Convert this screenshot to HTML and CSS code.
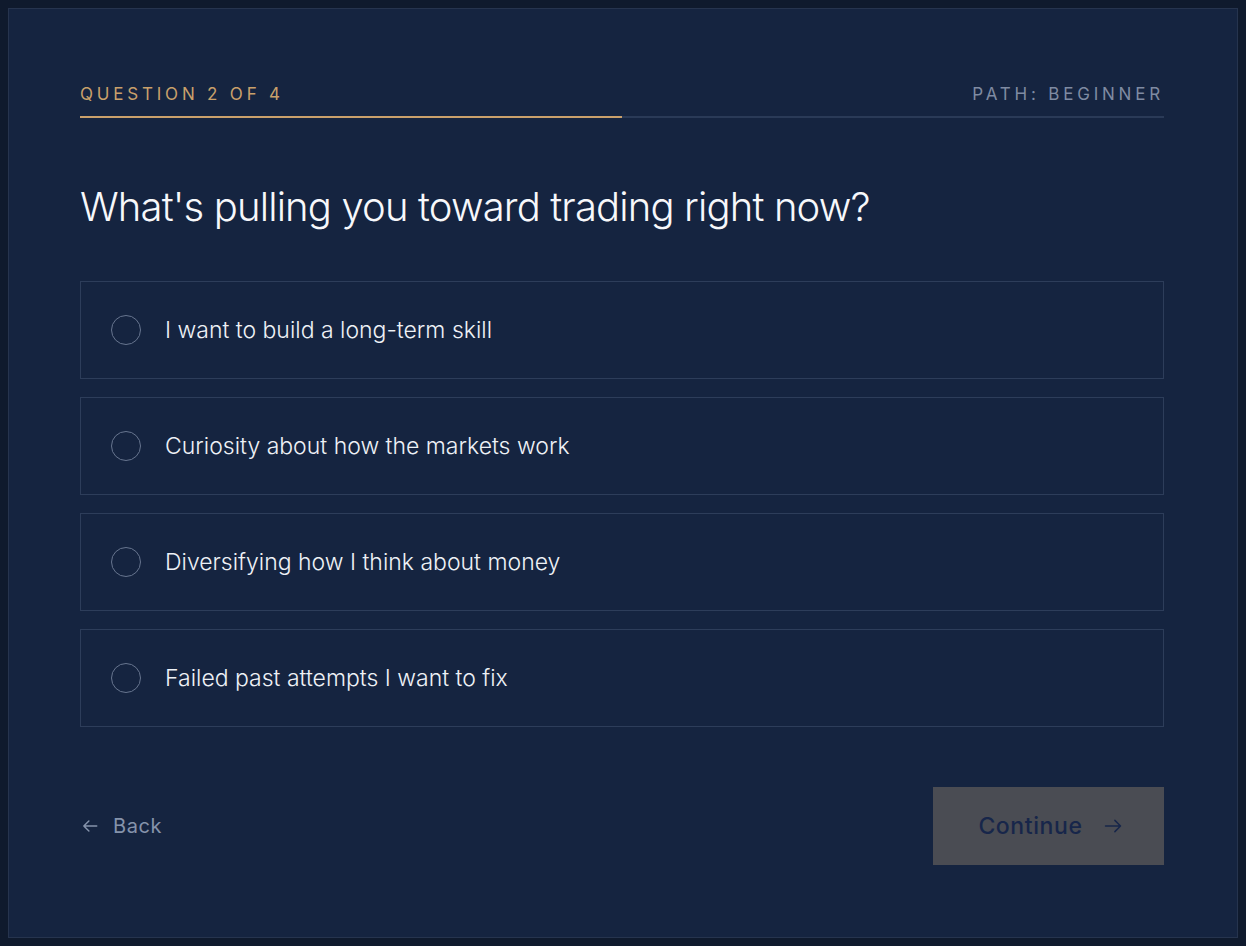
FILE: index.html
```html
<!DOCTYPE html>
<html lang="en">
<head>
    <meta charset="UTF-8">
    <meta name="viewport" content="width=device-width, initial-scale=1.0">
    <title>Trading path quiz</title>
    <link rel="stylesheet" href="styles.css">
</head>
<body>
    <div class="card">
        <div class="progress-head">
            <span class="step">Question 2 of 4</span>
            <span class="path">Path: Beginner</span>
        </div>
        <div class="progress-track">
            <div class="progress-fill" style="width: 50%;"></div>
        </div>

        <h1 class="question">What's pulling you toward trading right now?</h1>

        <div class="options">
            <label class="option">
                <span class="radio"></span>
                <span class="option-text">I want to build a long-term skill</span>
            </label>
            <label class="option">
                <span class="radio"></span>
                <span class="option-text">Curiosity about how the markets work</span>
            </label>
            <label class="option">
                <span class="radio"></span>
                <span class="option-text">Diversifying how I think about money</span>
            </label>
            <label class="option">
                <span class="radio"></span>
                <span class="option-text">Failed past attempts I want to fix</span>
            </label>
        </div>

        <div class="footer">
            <button class="back-btn">
                <svg width="18" height="18" viewBox="0 0 16 16" fill="none" stroke="currentColor" stroke-width="1.3" stroke-linecap="round" stroke-linejoin="round"><path d="M14 8H2.5M7 3.5L2.5 8 7 12.5"/></svg>
                Back
            </button>
            <button class="continue-btn" disabled>
                Continue
                <svg width="20" height="20" viewBox="0 0 16 16" fill="none" stroke="currentColor" stroke-width="1.2" stroke-linecap="round" stroke-linejoin="round"><path d="M2 8h12M9.5 3.5L14 8l-4.5 4.5"/></svg>
            </button>
        </div>
    </div>
</body>
</html>
```

FILE: styles.css
```css
body {
    margin: 8px;
    background-color: #0f1a2d;
    font-family: Inter, "Noto Sans", sans-serif;
    color: #eef1f6;
}
.card {
    box-sizing: border-box;
    height: 930px;
    background-color: #152440;
    border: 1px solid #26344e;
    padding: 71px 73px 72px 71px;
    display: flex;
    flex-direction: column;
}
.progress-head {
    display: flex;
    justify-content: space-between;
    align-items: center;
    height: 24px;
    padding-top: 2px;
    font-size: 17px;
    letter-spacing: 3.8px;
    text-transform: uppercase;
}
.step {
    color: #c9a06b;
}
.path {
    color: #7f8ba2;
}
.progress-track {
    margin-top: 10px;
    height: 2px;
    background-color: #2a3a57;
}
.progress-fill {
    height: 2px;
    background-color: #c9a06b;
}
.question {
    margin: 63px 0 48px;
    font-size: 40px;
    font-weight: 300;
    line-height: 52px;
    letter-spacing: -0.85px;
    color: #f7f8fb;
}
.options {
    display: flex;
    flex-direction: column;
    gap: 18px;
}
.option {
    display: flex;
    align-items: center;
    gap: 24px;
    height: 98px;
    box-sizing: border-box;
    padding: 0 30px;
    border: 1px solid #2d3d5a;
    cursor: pointer;
}
.radio {
    width: 30px;
    height: 30px;
    box-sizing: border-box;
    border: 1px solid #67758f;
    border-radius: 50%;
    flex-shrink: 0;
}
.option-text {
    font-size: 23px;
    font-weight: 300;
    color: #eef1f6;
}
.footer {
    margin-top: auto;
    display: flex;
    justify-content: space-between;
    align-items: center;
}
.back-btn {
    display: flex;
    align-items: center;
    gap: 14px;
    background: none;
    border: none;
    padding: 0 0 0 1px;
    font-family: inherit;
    font-size: 20px;
    letter-spacing: 0.6px;
    color: #8593ab;
    cursor: pointer;
}
.continue-btn {
    display: flex;
    align-items: center;
    justify-content: center;
    gap: 20px;
    width: 231px;
    height: 78px;
    background-color: #4a4c53;
    border: none;
    font-family: inherit;
    font-size: 23px;
    font-weight: 500;
    letter-spacing: 0.6px;
    color: #17264a;
    padding: 0 0 0 4px;
}
```
